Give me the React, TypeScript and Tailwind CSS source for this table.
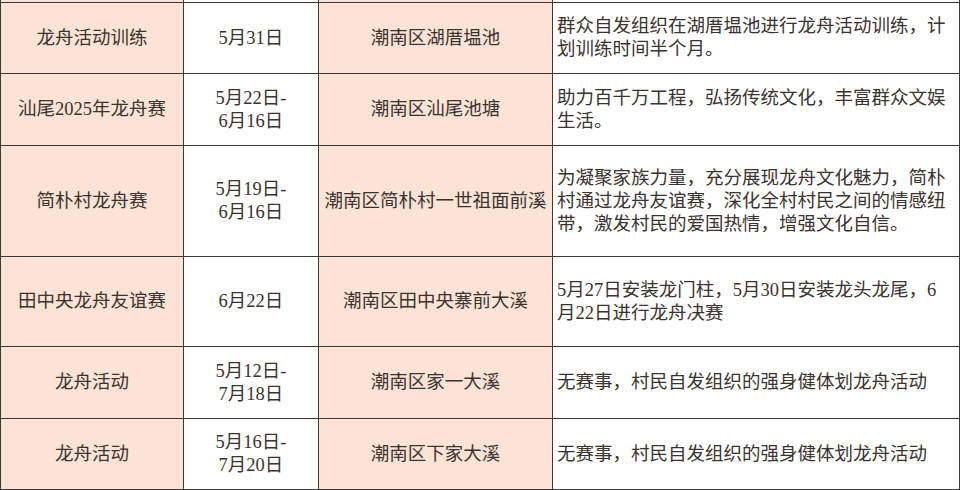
const rows = [
    {
        name: ["龙舟活动训练"],
        date: ["5月31日"],
        place: "潮南区湖厝塭池",
        desc: ["群众自发组织在湖厝塭池进行龙舟活动训练，计", "划训练时间半个月。"],
        h: "h-[71px]",
    },
    {
        name: ["汕尾2025年龙舟赛"],
        date: ["5月22日-", "6月16日"],
        place: "潮南区汕尾池塘",
        desc: ["助力百千万工程，弘扬传统文化，丰富群众文娱", "生活。"],
        h: "h-[72px]",
    },
    {
        name: ["简朴村龙舟赛"],
        date: ["5月19日-", "6月16日"],
        place: "潮南区简朴村一世祖面前溪",
        desc: [
            "为凝聚家族力量，充分展现龙舟文化魅力，简朴",
            "村通过龙舟友谊赛，深化全村村民之间的情感纽",
            "带，激发村民的爱国热情，增强文化自信。",
        ],
        h: "h-[111px]",
    },
    {
        name: ["田中央龙舟友谊赛"],
        date: ["6月22日"],
        place: "潮南区田中央寨前大溪",
        desc: ["5月27日安装龙门柱，5月30日安装龙头龙尾，6", "月22日进行龙舟决赛"],
        h: "h-[90px]",
    },
    {
        name: ["龙舟活动"],
        date: ["5月12日-", "7月18日"],
        place: "潮南区家一大溪",
        desc: ["无赛事，村民自发组织的强身健体划龙舟活动"],
        h: "h-[72px]",
    },
    {
        name: ["龙舟活动"],
        date: ["5月16日-", "7月20日"],
        place: "潮南区下家大溪",
        desc: ["无赛事，村民自发组织的强身健体划龙舟活动"],
        h: "h-[71px]",
    },
]

const cell = "border-r border-b border-[#3a3a3a] flex items-center"

export default function App() {
    return (
        <main
            className="w-[960px] h-[490px] overflow-hidden bg-white text-[#3b3330] text-[18.5px] leading-[23px]"
            style={{ fontFamily: '"Liberation Serif", "Noto Sans CJK SC", serif' }}
        >
            <div className="grid grid-cols-[183px_135px_234px_407px] border-l border-[#3a3a3a]">
                <div className={`${cell} h-[3px] bg-[#fbe3d6]`} />
                <div className={`${cell} h-[3px] bg-white`} />
                <div className={`${cell} h-[3px] bg-[#fbe3d6]`} />
                <div className={`${cell} h-[3px] bg-white`} />

                {rows.map((r, i) => (
                    <div key={i} className="contents">
                        <div className={`${cell} ${r.h} justify-center text-center bg-[#fbe3d6]`}>
                            <span>{r.name[0]}</span>
                        </div>
                        <div className={`${cell} ${r.h} justify-center text-center bg-white`}>
                            <div className="flex flex-col items-center">
                                {r.date.map((d) => (
                                    <span key={d}>{d}</span>
                                ))}
                            </div>
                        </div>
                        <div className={`${cell} ${r.h} justify-center text-center bg-[#fbe3d6]`}>
                            <span className="whitespace-nowrap">{r.place}</span>
                        </div>
                        <div className={`${cell} ${r.h} pl-[4px] bg-white`}>
                            <div className="flex flex-col">
                                {r.desc.map((d) => (
                                    <span key={d} className="whitespace-nowrap">{d}</span>
                                ))}
                            </div>
                        </div>
                    </div>
                ))}
            </div>
        </main>
    )
}
